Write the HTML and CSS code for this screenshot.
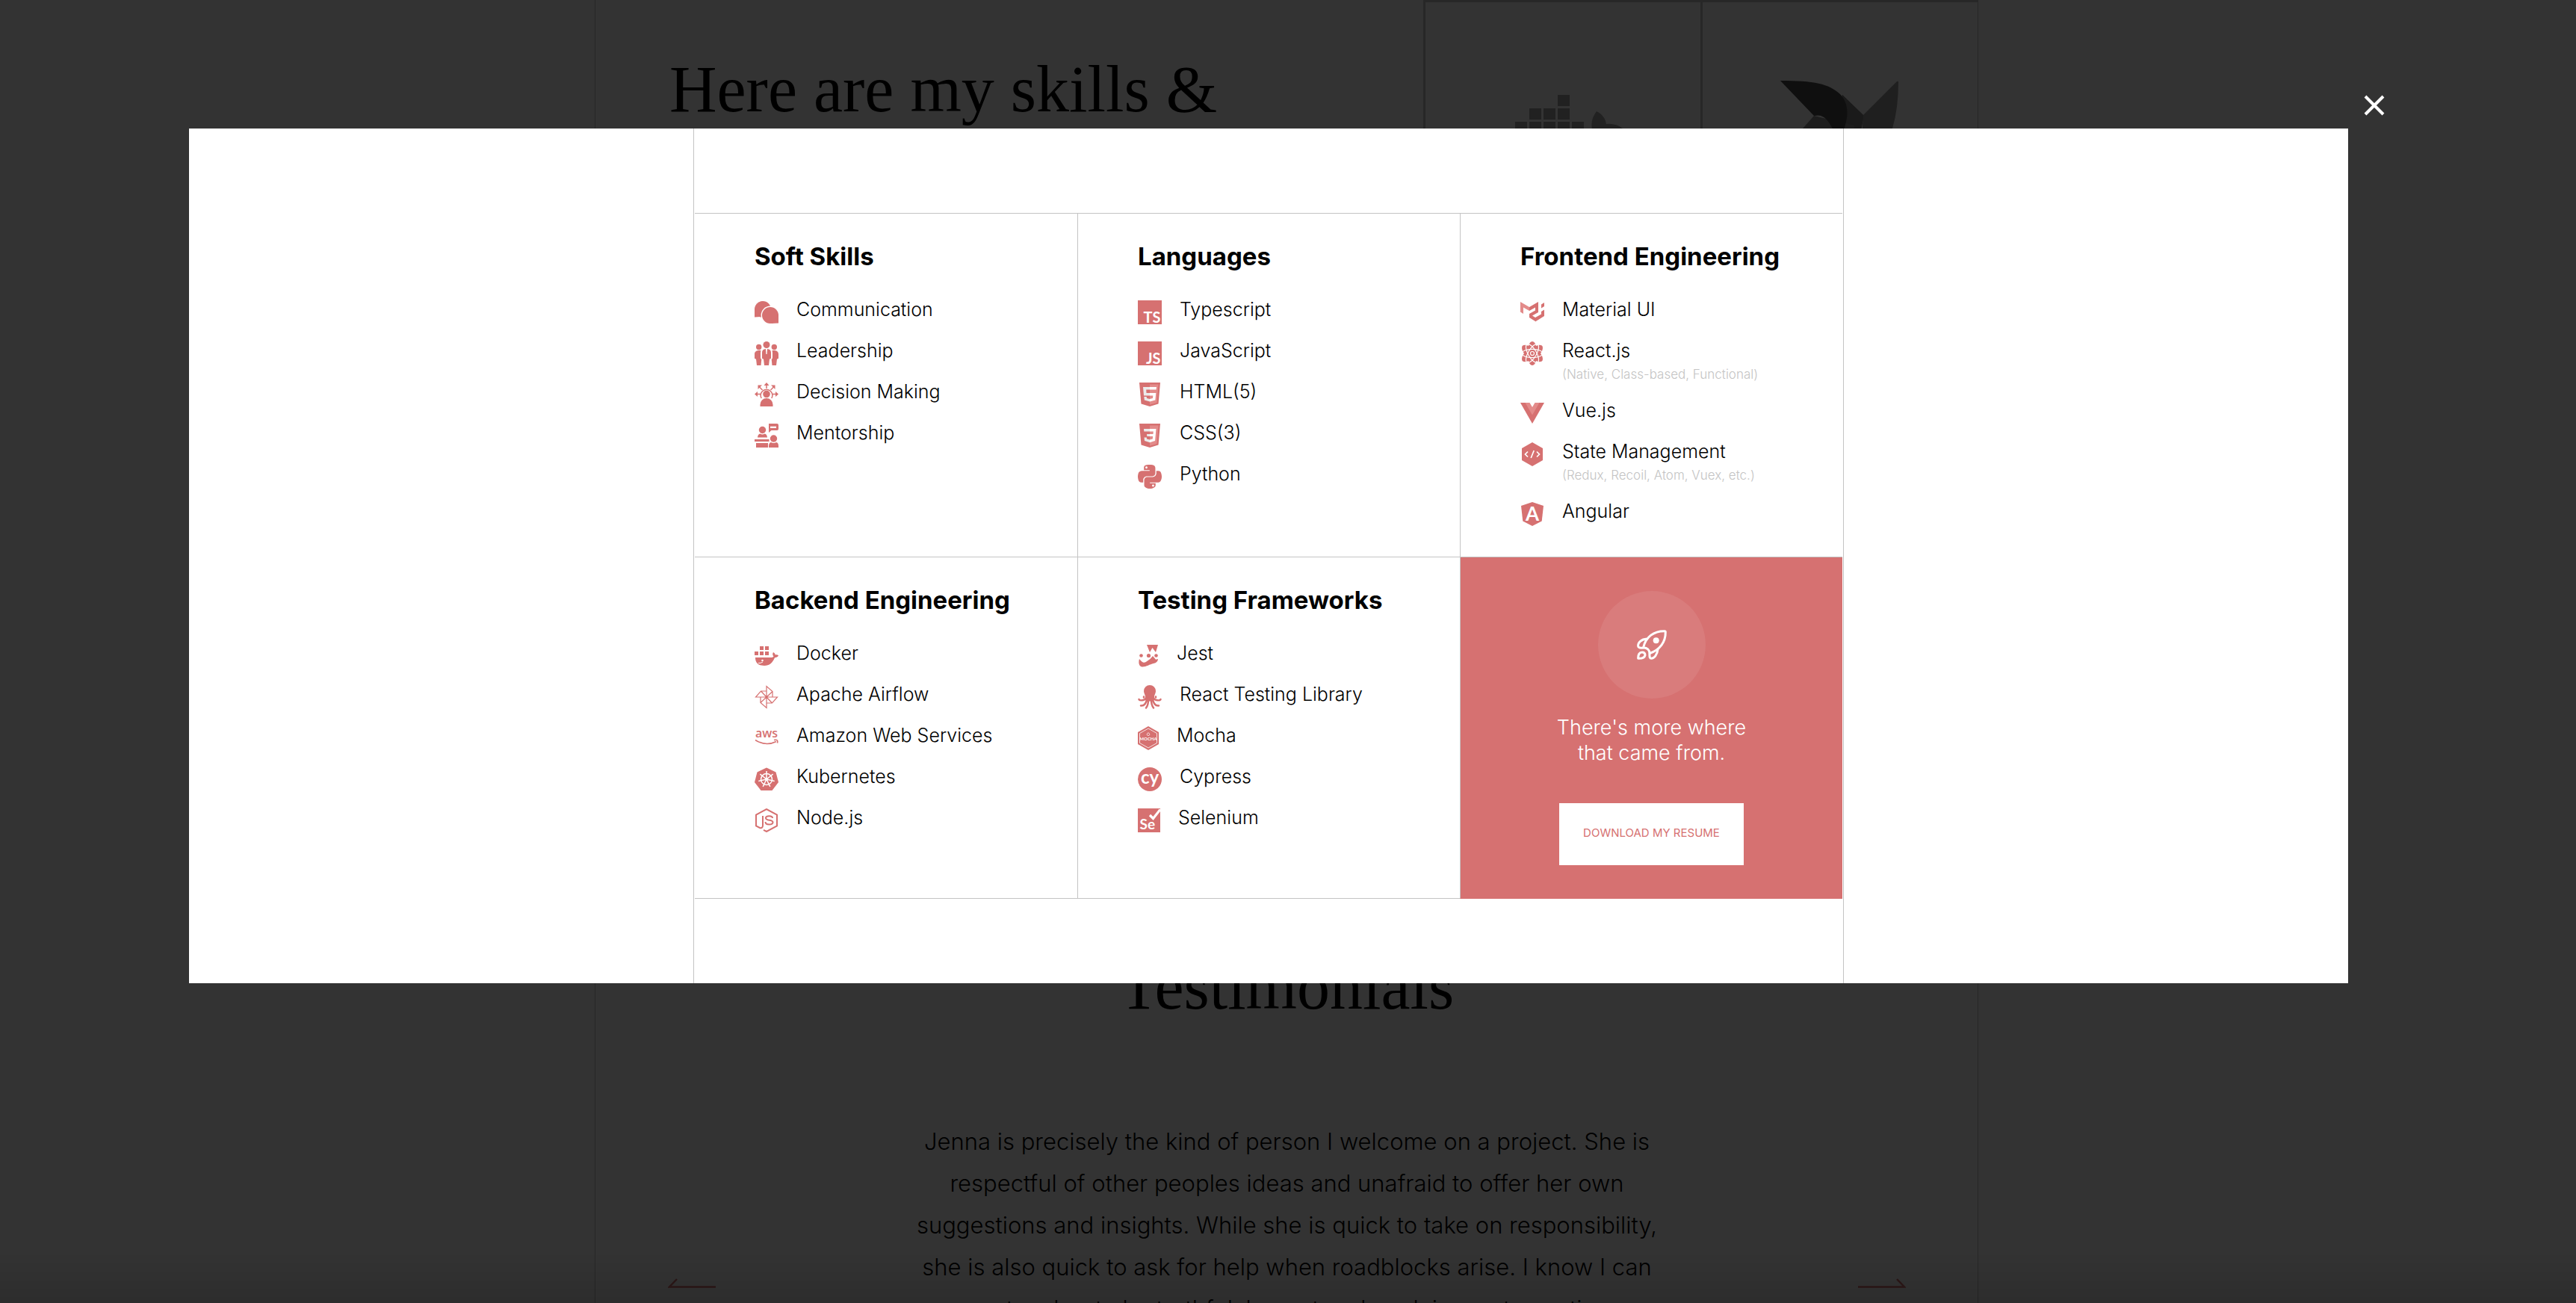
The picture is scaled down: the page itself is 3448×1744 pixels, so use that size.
FILE: index.html
```html
<!DOCTYPE html>
<html lang="en">
<head>
<meta charset="utf-8">
<title>Skills</title>
<link rel="stylesheet" href="styles.css">
</head>
<body>
<div class="page">
  <main class="frame">
    <section class="intro">
      <h1 class="display">Here are my skills &amp;</h1>
      <div class="tiles">
        <div class="tile">
          <svg width="160" height="120" viewBox="-9 0 160 120" fill="#a5a5a5" aria-hidden="true">
            <path d="M64 3h16v15H64zM26 21h16v15H26zM45 21h16v15H45zM64 21h16v15H64zM7 39h16v15H7zM26 39h16v15H26zM45 39h16v15H45zM64 39h16v15H64zM83 39h16v15H83z"/>
            <path d="M116 25c8 4 12 10 13 17 8-1 16 1 22 6-6 9-16 12-25 12-12 32-34 48-66 48C25 108 2 91 2 57h100c4 0 7-1 9-3-3-11-2-20 5-29z"/>
          </svg>
        </div>
        <div class="tile">
          <svg width="160" height="120" viewBox="0 0 160 120" aria-hidden="true">
            <path fill="#828282" d="M83 19l29 28-4 20-40 50z"/>
            <path fill="#828282" d="M83 19l28 27-4 24H70z"/>
            <path fill="#9b9b9b" d="M111 46L156 1q2-1 2 1 0 35-8 62-10 30-43 43z"/>
            <path fill="#909090" d="M45 47L29 65l70 50V60z"/>
            <path fill="#4b4b4b" d="M0 0c45 0 65 4 80 18 12 13 12 30 4 50H72C64 52 58 44 45 47z"/>
          </svg>
        </div>
      </div>
    </section>
    <section class="testimonials">
      <h2 class="display">Testimonials</h2>
      <div class="carousel">
        <button class="arrow" type="button" aria-label="Previous">
          <svg width="64" height="14" viewBox="0 0 64 14" aria-hidden="true"><path d="M64 12.500H2L12 2" fill="none" stroke="currentColor" stroke-width="2.500"/></svg>
        </button>
        <blockquote class="quote">Jenna is precisely the kind of person I welcome on a project. She is<br>respectful of other peoples ideas and unafraid to offer her own<br>suggestions and insights. While she is quick to take on responsibility,<br>she is also quick to ask for help when roadblocks arise. I know I can<br>count on her to be truthful, honest and work in most questions</blockquote>
        <button class="arrow" type="button" aria-label="Next">
          <svg width="64" height="14" viewBox="0 0 64 14" aria-hidden="true"><path d="M0 12.500h62L52 2" fill="none" stroke="currentColor" stroke-width="2.500"/></svg>
        </button>
      </div>
    </section>
  </main>
</div>

<div class="overlay">
  <div class="modal" role="dialog" aria-modal="true" aria-label="Skills">
    <button class="close" type="button" aria-label="Close">
      <svg width="28" height="28" viewBox="0 0 28 28" aria-hidden="true"><path d="M2 2l24 24M26 2L2 26" stroke="currentColor" stroke-width="4"/></svg>
    </button>
    <div class="sheet">
      <div class="grid">

        <section class="cell">
          <h3>Soft Skills</h3>
          <ul>
            <li>
              <svg width="32" height="32" viewBox="0 0 32 32"><circle cx="11" cy="12" r="11"/><path d="M0 11v11.500l9-.5z"/><circle cx="21" cy="20" r="12.400" fill="#fff"/><circle cx="21" cy="20" r="11"/><path d="M32 19v11.500l-10 .5z"/></svg>
              <div>Communication</div>
            </li>
            <li>
              <svg width="32" height="32" viewBox="0 0 32 32"><circle cx="16" cy="4.500" r="4.500"/><circle cx="5.700" cy="7.500" r="3.700"/><circle cx="26.300" cy="7.500" r="3.700"/><path d="M15 10l.4 7h1.200l.4-7c3.500.3 5 2 5 5v7c0 1-1 1.500-2 1.500L19 32h-6l-1-8.500c-1 0-2-.5-2-1.500v-7c0-3 1.500-4.700 5-5z"/><path d="M8.500 12C4 11.500 0 12.500 0 17v5c0 1 1 1.500 2 1.500L3 32h5.500l.8-8c-1-.6-1.300-1.500-1.300-3v-5c0-1.600.2-3 .5-4zM23.500 12c4.500-.5 8.500.5 8.500 5v5c0 1-1 1.500-2 1.500L29 32h-5.500l-.8-8c1-.6 1.300-1.500 1.300-3v-5c0-1.600-.2-3-.5-4z"/></svg>
              <div>Leadership</div>
            </li>
            <li>
              <svg width="32" height="32" viewBox="0 0 32 32"><circle cx="16" cy="15.500" r="4.800"/><path d="M7.500 32v-2.500a8.500 8.500 0 0 1 17 0V32z"/><path d="M9.200 21a7.800 7.800 0 1 1 13.600 0M16 8V2M10.500 10L6 5.500M21.500 10L26 5.500M8 15.500H2M24 15.500h6" fill="none" stroke="currentColor" stroke-width="1.500"/><path d="M16 0l3.500 4h-7zM0 15.500l4-3.500v7zM32 15.500L28 12v7zM4.500 3.500H10l-5.500 5.500zM27.500 3.500H22l5.500 5.500z"/></svg>
              <div>Decision Making</div>
            </li>
            <li>
              <svg width="32" height="32" viewBox="0 0 32 32"><circle cx="10.500" cy="8.500" r="4.700"/><circle cx="25.500" cy="20" r="4.700"/><path d="M4 18.500c.3-3 1.500-4.500 3.500-5 2 1.300 4 1.300 6 0 2 .5 3.200 2 3.500 5zM0 21h19.500v3H0zM2 26h16v6H2zM19 32v-2c0-3 1.300-4.500 3-5 2.300 1.400 4.700 1.400 7 0 2 .6 3 2 3 5v2z"/><path fill-rule="evenodd" d="M19 0h11a2 2 0 0 1 2 2v5a2 2 0 0 1-2 2h-7.500L19 12zM21 3.700V6h8V3.700z"/></svg>
              <div>Mentorship</div>
            </li>
          </ul>
        </section>

        <section class="cell">
          <h3>Languages</h3>
          <ul>
            <li>
              <svg width="32" height="32" viewBox="0 0 32 32"><path d="M0 0h32v32H0z"/><text class="mark" x="30.500" y="29.500" font-size="20" text-anchor="end">TS</text></svg>
              <div>Typescript</div>
            </li>
            <li>
              <svg width="32" height="32" viewBox="0 0 32 32"><path d="M0 0h32v32H0z"/><text class="mark" x="30.500" y="29.500" font-size="20" text-anchor="end">JS</text></svg>
              <div>JavaScript</div>
            </li>
            <li>
              <svg width="32" height="32" viewBox="0 0 32 32"><path d="M2 0h28l-2.500 28.500L16 32 4.500 28.500z"/><path d="M16 2.500h11.500L25.400 27 16 29.700z" fill="#e38b8a"/><path d="M16 6H7l1 11.500h8V14h-4.500l-.3-4.500H16zM16 22l-4-1-.3-2H8.300l.5 4.500L16 25.500z" fill="#ebebeb"/><path d="M16 6h9l-.4 3.500H16zM16 14h8.300l-.9 9.500-7.400 2V22l4-1 .3-3.500H16z" fill="#fff"/></svg>
              <div>HTML(5)</div>
            </li>
            <li>
              <svg width="32" height="32" viewBox="0 0 32 32"><path d="M2 0h28l-2.500 28.500L16 32 4.500 28.500z"/><path d="M16 2.500h11.500L25.400 27 16 29.700z" fill="#e38b8a"/><path d="M16 7H8l.3 3.500H16zM16 14h-4l.3 3H16zM16 21.500l-4-1-.2-2H8.500l.5 4.500 7 2.200z" fill="#ebebeb"/><path d="M16 7h8.500l-1.400 16-7.100 2.200v-3.700l3.800-1 .3-3.500H16v-3h4.500l.3-3.500H16z" fill="#fff"/></svg>
              <div>CSS(3)</div>
            </li>
            <li>
              <svg width="32" height="32" viewBox="0 32 448 448"><path d="M439.800 200.500c-7.700-30.900-22.300-54.200-53.400-54.200h-40.100v47.400c0 36.800-31.200 67.800-66.800 67.800H172.700c-29.200 0-53.400 25-53.400 54.300v101.800c0 29 25.200 46 53.400 54.300 33.800 9.900 66.300 11.700 106.800 0 26.900-7.800 53.400-23.500 53.400-54.300v-40.700H226.200v-13.600h160.200c31.100 0 42.600-21.700 53.400-54.200 11.200-33.500 10.700-65.700 0-108.600zM286.200 404c11.100 0 20.100 9.100 20.100 20.300 0 11.300-9 20.400-20.100 20.400-11 0-20.100-9.200-20.100-20.400.1-11.300 9.100-20.300 20.100-20.300zM167.800 248.100h106.800c29.700 0 53.400-24.500 53.400-54.300V91.900c0-29-24.400-50.700-53.400-55.600-35.800-5.900-74.700-5.600-106.800.1-45.200 8-53.400 24.700-53.400 55.600v40.700h106.900v13.600h-147c-31.100 0-58.300 18.700-66.800 54.200-9.800 40.700-10.200 66.100 0 108.600 7.600 31.600 25.700 54.200 56.800 54.200H101v-48.800c0-35.300 30.500-66.400 66.800-66.400zm-6.700-142.600c-11.100 0-20.100-9.100-20.100-20.300.1-11.300 9-20.400 20.100-20.400 11 0 20.100 9.200 20.100 20.400s-9 20.300-20.100 20.300z"/></svg>
              <div>Python</div>
            </li>
          </ul>
        </section>

        <section class="cell">
          <h3>Frontend Engineering</h3>
          <ul>
            <li>
              <svg width="32" height="32" viewBox="0 0 32 32"><path d="M0 2l12 7v5L4 9.500V18l-4-2.500z" fill="#e38b8a"/><path d="M12 9l12-7v14l-8 4.500 4 2.500v5l-8-5v-5l8-4.500V9.500L12 14z"/><path d="M20 23l8-4.500V15l4-2.500V21l-12 7.500z"/><path d="M28 5.500L32 3v5l-4 2.500z"/></svg>
              <div>Material UI</div>
            </li>
            <li>
              <svg width="32" height="32" viewBox="0 0 32 32"><path d="M16 0c3 0 5 4.500 5 6 4-2 8-1.500 8.800 1C30.500 10 29 13.500 27 16c2 2.500 3.500 6 2.800 9-.8 2.500-4.800 3-8.800 1 0 1.500-2 6-5 6s-5-4.500-5-6c-4 2-8 1.500-8.800-1C1.500 22 3 18.500 5 16 3 13.500 1.500 10 2.200 7 3 4.500 7 4 11 6c0-1.500 2-6 5-6z"/><g fill="none" stroke="#fff" stroke-width="1.200"><ellipse cx="16" cy="16" rx="14" ry="5.600"/><ellipse cx="16" cy="16" rx="14" ry="5.600" transform="rotate(60 16 16)"/><ellipse cx="16" cy="16" rx="14" ry="5.600" transform="rotate(120 16 16)"/><circle cx="16" cy="16" r="2.500"/></g></svg>
              <div>React.js<small>(Native, Class-based, Functional)</small></div>
            </li>
            <li>
              <svg width="32" height="32" viewBox="0 0 32 32"><path d="M0 2h32L16 30z"/><path d="M6.500 2H13l3 5 3-5h6.500L16 18.500z" fill="#e38b8a"/><path d="M12.500 2h7L16 8z" fill="#fff"/></svg>
              <div>Vue.js</div>
            </li>
            <li>
              <svg width="32" height="32" viewBox="0 0 32 32"><path d="M16 0l14 8v16l-14 8-14-8V8z"/><path d="M10 12.500L6.500 16l3.500 3.500M22 12.500l3.500 3.500-3.500 3.500M18.200 11l-4 10" fill="none" stroke="#fff" stroke-width="1.700"/></svg>
              <div>State Management<small>(Redux, Recoil, Atom, Vuex, etc.)</small></div>
            </li>
            <li>
              <svg width="32" height="32" viewBox="0 0 32 32"><path d="M16 0l15 5-2.300 20.500L16 32 3.300 25.500 1 5z"/><text class="mark" x="16" y="25" font-size="26" text-anchor="middle">A</text></svg>
              <div>Angular</div>
            </li>
          </ul>
        </section>

        <section class="cell">
          <h3>Backend Engineering</h3>
          <ul>
            <li>
              <svg width="32" height="32" viewBox="0 0 32 32"><path d="M7 3h5v5H7zM14 3h5v5h-5zM0 10h5v5H0zM7 10h5v5H7zM14 10h5v5h-5z"/><path d="M1 18h21c2 0 3-.6 3.500-1.500-1.500-1.300-1.700-3.500-.5-5.500 1.700.8 2.500 2 2.700 3.500 1.500-.4 3-.2 4.300.7-1 2.300-3 3-5 3C24 25 20 29 13 29 5 29 1 25 1 18z"/><circle cx="10.500" cy="22" r="1.300" fill="#fff"/><path d="M5 25.500q3 .5 6-1.500" fill="none" stroke="#fff"/></svg>
              <div>Docker</div>
            </li>
            <li>
              <svg width="32" height="32" viewBox="0 0 32 32"><path d="M16 16V1.500L24 8.500V16M16 16l8-7.500M16 16h14.500L23.500 24H16M16 16l7.500 8M16 16v14.500L8 23.500V16M16 16l-8 7.500M16 16H1.500L8.500 8H16M16 16L8.500 8" fill="none" stroke="currentColor" stroke-width="1.200"/></svg>
              <div>Apache Airflow</div>
            </li>
            <li>
              <svg width="32" height="32" viewBox="0 0 32 32"><text class="aws" x="16" y="15" font-size="16" text-anchor="middle">aws</text><path d="M1 18.500q14 9 28 2M26 18.500q6-1.500 4.500 4" fill="none" stroke="currentColor" stroke-width="1.600"/></svg>
              <div>Amazon Web Services</div>
            </li>
            <li>
              <svg width="32" height="32" viewBox="0 0 32 32"><path d="M16 .5l12.500 6L32 20l-8.500 11h-15L0 20 3.500 6.500z"/><g fill="none" stroke="#fff" stroke-width="1.500"><circle cx="16" cy="16" r="7.500"/><path d="M16 16V5M16 16l8.600-6.900M16 16l10.700 2.400M16 16l4.800 9.900M16 16l-4.800 9.900M16 16L5.300 18.400M16 16L7.400 9.100"/></g><circle cx="16" cy="16" r="2" fill="#fff"/></svg>
              <div>Kubernetes</div>
            </li>
            <li>
              <svg width="32" height="32" viewBox="0 0 32 32"><g fill="none" stroke="currentColor" stroke-width="2"><path d="M12 28.800l4 2.200 14-7.500V8.500L16 1 2 8.500v15l5 2.500c2.500.6 4-.5 4-3V10"/><path d="M24 13c0-2-1.500-2.700-4.500-2.700-3 0-4.500 1-4.500 2.700 0 4 9.500 1.500 9.500 5.500 0 2-1.800 3-5 3-3.500 0-5-1.200-5-3.500"/></g></svg>
              <div>Node.js</div>
            </li>
          </ul>
        </section>

        <section class="cell">
          <h3>Testing Frameworks</h3>
          <ul>
            <li>
              <svg width="28" height="32" viewBox="0 0 28 32"><path d="M12 1h15l-3 10-4.500-6L16 11z"/><circle cx="4.500" cy="15.500" r="2.300"/><circle cx="14.500" cy="15.500" r="2.600"/><circle cx="24.500" cy="15.500" r="2.300"/><path d="M2 20c-1.500 5-.5 10.500 4.500 10.500S16 27 21 26c4-.7 6-3 6-6l-3 .8-4-4.800-3.500 4C13 22 10 26 7 24.500c-2-1-3-2.500-5-4.500z"/></svg>
              <div>Jest</div>
            </li>
            <li>
              <svg width="32" height="32" viewBox="0 0 32 32"><path d="M8 8a8 8 0 0 1 16 0c0 3-2 5-2 7.500 0 3-1.500 5.500-3 6h-6c-1.500-.5-3-3-3-6C10 13 8 11 8 8z"/><g fill="none" stroke="currentColor" stroke-width="2.500" stroke-linecap="round"><path d="M11 17c-1 4-9 4-9.500 2M12 19c-1 6-4 9-8 8.500M14 20c0 5-1 8-3 10.500M21 17c1 4 9 4 9.500 2M20 19c1 6 4 9 8 8.500M18 20c0 5 1 8 3 10.500M8 15.500v1M24 15.500v1"/></g></svg>
              <div>React Testing Library</div>
            </li>
            <li>
              <svg width="28" height="32" viewBox="0 0 28 32"><path d="M14 0l14 8v16l-14 8-14-8V8z"/><path d="M14 3l11.500 6.500v13L14 29 2.500 22.500v-13zM14 8.500c2 1.500 2.500 4 0 4s-2-2.500 0-4z" fill="none" stroke="#fff" stroke-width=".8"/><text class="mark" x="14" y="18.500" font-size="6" text-anchor="middle">MOCHA</text></svg>
              <div>Mocha</div>
            </li>
            <li>
              <svg width="32" height="32" viewBox="0 0 32 32"><circle cx="16" cy="16" r="16"/><text class="mark" x="16" y="22" font-size="24" text-anchor="middle">cy</text></svg>
              <div>Cypress</div>
            </li>
            <li>
              <svg width="30" height="32" viewBox="0 0 30 32"><path d="M0 0h30v32H0z"/><text class="mark" x="2.500" y="28" font-size="19">Se</text><path d="M16 9l4.500 4.500L30 1.500" fill="none" stroke="#fff" stroke-width="3.200"/></svg>
              <div>Selenium</div>
            </li>
          </ul>
        </section>

        <section class="cell cta">
          <div class="badge">
            <svg width="40" height="40" viewBox="0 0 40 40" fill="none" stroke="#fff" stroke-width="3" stroke-linejoin="round" aria-hidden="true"><path d="M8.500 24C12 9 23 1.500 37 1.700c1 0 1.300.3 1.300 1.300C38.500 16 31 27 17 31.500c0-4.500-3.500-8-8.500-7.500z"/><path d="M13.500 12C6 12.500 1 17 1.700 22c.4 2 2.500 2.500 6.800 2M28 26c-.5 7-5 12.300-8.700 12.300-2 0-2.600-2-2.300-6.800"/><path d="M1.700 38.300C1.500 33 3.500 30 7 30c3 0 4 2 4 4-.6 3-4 4.500-9.300 4.300z"/><circle cx="25.700" cy="14.300" r="4" fill="#fff" stroke="none"/></svg>
          </div>
          <p>There's more where<br>that came from.</p>
          <a class="download" href="#resume">DOWNLOAD MY RESUME</a>
        </section>

      </div>
    </div>
  </div>
</div>
</body>
</html>
```
FILE: styles.css
```css
:root {
  --accent: #d67171;
  --line: #c4c4c4;
}

* {
  box-sizing: border-box;
}

html,
body {
  height: 100%;
  margin: 0;
  overflow: hidden;
}

body {
  background: #fff;
  color: #000;
  font-family: Inter, "Open Sans", sans-serif;
  font-weight: 300;
}

h1, h2, h3, p, ul, blockquote {
  margin: 0;
  padding: 0;
}

button {
  padding: 0;
  border: 0;
  background: none;
  cursor: pointer;
}

svg {
  display: block;
}

/* Page behind the dialog */
.page {
  padding: 0 800px 0 796px;
}

.frame {
  border: solid var(--line);
  border-width: 0 1px;
}

.intro {
  display: flex;
  justify-content: space-between;
  padding: 0 0 891px 99px;
}

.display {
  font: 400 88px/100px "Liberation Serif", serif;
}

.intro .display {
  padding-top: 70px;
}

.tiles {
  display: grid;
  grid-template-columns: 371px 371px;
}

.tile {
  display: flex;
  justify-content: center;
  height: 374px;
  padding-top: 121px;
  border: solid var(--line);
  border-width: 3px 0 3px 3px;
}

.tile + .tile {
  padding-top: 105px;
}

.testimonials .display {
  padding-top: 6px;
  text-align: center;
}

.carousel {
  display: flex;
  justify-content: space-between;
  padding: 129px 96px 0 97px;
}

.arrow {
  align-self: flex-start;
  margin-top: 210px;
  color: var(--accent);
}

.quote {
  font-size: 31px;
  line-height: 56px;
  text-align: center;
}

/* Dialog */
.overlay {
  position: fixed;
  inset: 0;
  padding: 172px 305px 0 253px;
  background: linear-gradient(transparent 96%, rgba(0, 0, 0, .12)), rgba(0, 0, 0, .8);
}

.modal {
  position: relative;
  padding: 0 24px;
  background: #fff;
}

.close {
  position: absolute;
  top: -45px;
  right: -49px;
  color: #fff;
}

.sheet {
  max-width: 1540px;
  margin: 0 auto;
  padding: 113px 1px;
  border: solid var(--line);
  border-width: 0 1px;
}

.grid {
  display: grid;
  grid-template-columns: repeat(3, 1fr);
  border-top: 1px solid var(--line);
}

.cell {
  padding: 37px 0 41px 80px;
  border: solid var(--line);
  border-width: 0 0 1px 1px;
}

.cell:nth-child(3n + 1) {
  border-left: 0;
}

.cell h3 {
  margin-bottom: 35px;
  font-size: 33px;
  font-weight: 700;
  line-height: 40px;
}

.cell ul {
  display: grid;
  gap: 19px;
  list-style: none;
}

.cell li {
  display: flex;
  gap: 24px;
  font-size: 25px;
  line-height: 32px;
}

.cell li svg {
  flex: none;
  margin-top: 4px;
  color: var(--accent);
  fill: var(--accent);
}

.cell small {
  display: block;
  padding-top: 4px;
  color: var(--line);
  font-size: 17px;
  line-height: 25px;
}

.mark {
  fill: #fff;
  font-family: Lato, sans-serif;
  font-weight: 700;
}

.aws {
  font-family: "Open Sans", sans-serif;
  font-weight: 600;
}

.cell.cta {
  display: flex;
  flex-direction: column;
  align-items: center;
  padding: 45px 0 44px;
  border-bottom-color: var(--accent);
  background: var(--accent) padding-box;
  color: #fff;
}

.badge {
  display: grid;
  place-items: center;
  width: 144px;
  height: 144px;
  margin-bottom: 22px;
  border-radius: 50%;
  background: rgba(255, 255, 255, .08);
}

.cta p {
  margin-bottom: 50px;
  font-size: 27px;
  line-height: 34px;
  text-align: center;
}

.download {
  padding: 28px 32px 31px;
  background: #fff;
  color: var(--accent);
  font-size: 15px;
  font-weight: 400;
  line-height: 24px;
  text-decoration: none;
}
```
